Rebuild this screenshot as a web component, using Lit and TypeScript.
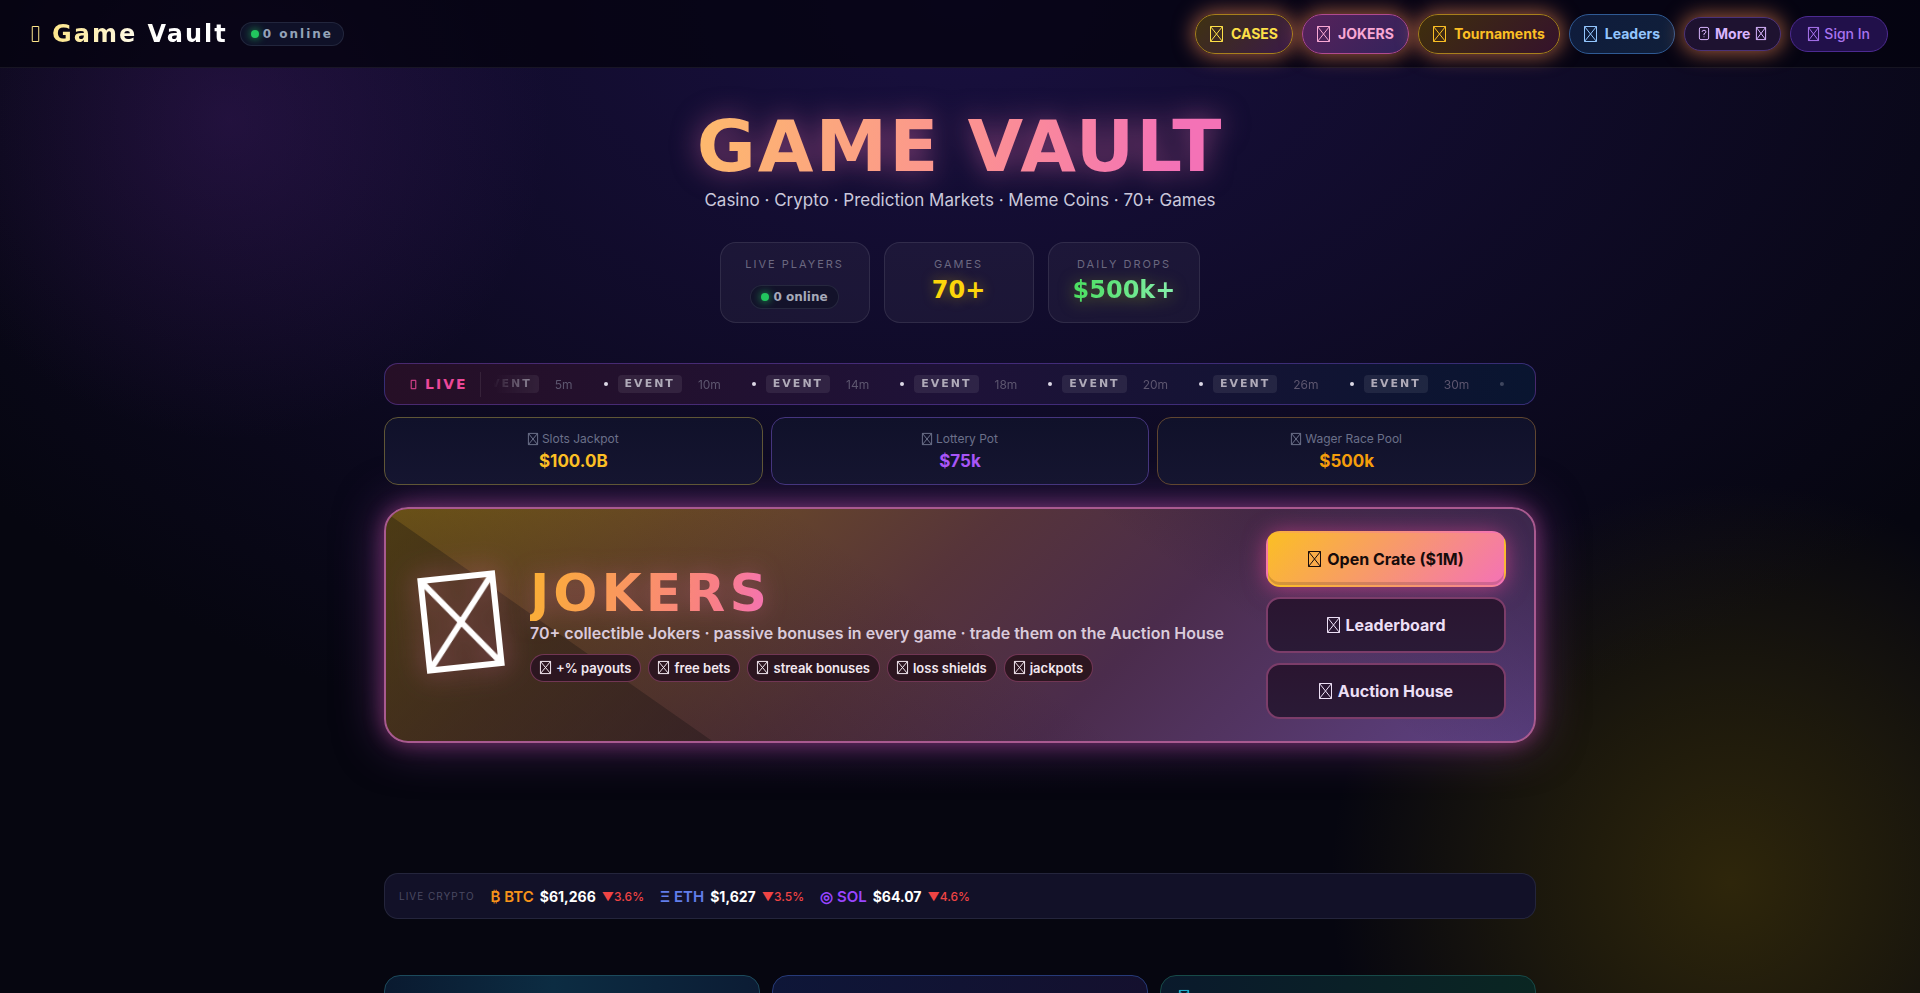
import { LitElement, html, css, svg, nothing } from "lit";
import { customElement, property } from "lit/decorators.js";

@customElement("glyph-box")
class GlyphBox extends LitElement {
  @property() kind = "cross";
  static styles = css`
    :host { display: inline-block; flex: none; }
    svg { display: block; width: 100%; height: 100%; overflow: visible; }
    path { fill: none; stroke: currentColor; stroke-width: var(--stroke, 1px); vector-effect: non-scaling-stroke; }
  `;
  render() {
    const marks: Record<string, unknown> = {
      cross: svg`<path d="M0.5 0.5H12.5V15.5H0.5Z M0.5 0.5L12.5 15.5 M12.5 0.5L0.5 15.5"/>`,
      plain: svg`<path d="M0.5 0.5H12.5V15.5H0.5Z"/>`,
      query: svg`<path d="M2.5 0.5H10.5Q12.5 .5 12.5 2.5V13.5Q12.5 15.5 10.5 15.5H2.5Q.5 15.5 .5 13.5V2.5Q.5 .5 2.5 .5Z M4 6Q4 4 6.5 4T9 6Q9 7.5 6.5 8.3V10 M6.5 11.6V12.6"/>`,
    };
    return html`<svg viewBox="0 0 13 16" preserveAspectRatio="none" aria-hidden="true">${marks[this.kind]}</svg>`;
  }
}

const NAV = [
  { label: "CASES", tone: "cases" },
  { label: "JOKERS", tone: "jokers" },
  { label: "Tournaments", tone: "tournaments" },
  { label: "Leaders", tone: "leaders" },
];
const EVENTS = ["5m", "10m", "14m", "18m", "20m", "26m", "30m", ""];
const POTS = [
  { label: "Slots Jackpot", value: "$100.0B", tone: "gold" },
  { label: "Lottery Pot", value: "$75k", tone: "violet" },
  { label: "Wager Race Pool", value: "$500k", tone: "amber" },
];
const PERKS = ["+% payouts", "free bets", "streak bonuses", "loss shields", "jackpots"];
const COINS = [
  { sign: "₿", code: "BTC", price: "$61,266", move: "3.6%", tone: "btc" },
  { sign: "Ξ", code: "ETH", price: "$1,627", move: "3.5%", tone: "eth" },
  { sign: "◎", code: "SOL", price: "$64.07", move: "4.6%", tone: "sol" },
];

@customElement("app-root")
class AppRoot extends LitElement {
  static styles = css`
    :host {
      display: block;
      height: 100vh;
      overflow-y: auto;
      scrollbar-width: none;
      color: #fff;
      font-family: Inter, "Open Sans", sans-serif;
      font-size: 14px;
      --display: "DejaVu Sans", Verdana, sans-serif;
      background:
        radial-gradient(circle 320px at 230px 120px, rgba(88, 36, 130, 0.28), transparent),
        radial-gradient(circle 400px at calc(100% - 190px) calc(100% - 110px), rgba(124, 100, 0, 0.34), rgba(100, 84, 0, 0.22) 50%, transparent),
        radial-gradient(ellipse 65% 80% at 50% 0, #191040, transparent),
        #060610;
    }
    * { box-sizing: border-box; }
    button, a { font: inherit; color: inherit; text-decoration: none; cursor: pointer; }
    h1, h2, p, dl, dd, ul { margin: 0; padding: 0; }
    ul { list-style: none; }

    header {
      display: flex;
      align-items: center;
      justify-content: space-between;
      height: 68px;
      padding: 0 32px;
      background: rgba(4, 3, 14, 0.78);
      border-bottom: 1px solid rgba(255, 255, 255, 0.07);
    }
    .brand { display: flex; align-items: center; gap: 12px; }
    .logo { display: flex; align-items: center; gap: 13px; font: 700 24px/28px var(--display); letter-spacing: 2px; }
    .logo span { background: linear-gradient(90deg, #fde68a, #fff 60%); -webkit-background-clip: text; color: transparent; }
    .logo glyph-box { width: 7px; height: 16px; color: #fde68a; }
    .online {
      display: inline-flex; align-items: center; gap: 4px;
      height: 24px; padding: 0 10px;
      border: 1px solid rgba(148, 163, 184, 0.15); border-radius: 12px;
      background: #0f1128; color: #94a3b8;
      font: 700 12px/16px var(--display);
    }
    .online.spaced { letter-spacing: 2px; }
    .online.dim { background: #13122a; color: #a5a9b8; }
    .online::before { content: ""; width: 8px; height: 8px; border-radius: 50%; background: #22c55e; box-shadow: 0 0 8px #22c55e; }
    nav { display: flex; align-items: center; gap: 9px; font-weight: 700; }
    .pill {
      display: inline-flex; align-items: center; gap: 8px;
      height: 40px; padding: 0 14px;
      border: 1px solid; border-radius: 20px; line-height: 20px;
    }
    .pill glyph-box { width: 13px; height: 16px; }
    .glow { box-shadow: 0 0 20px 2px rgba(251, 140, 85, 0.62); }
    .cases { color: #fde047; border-color: #a8801c; background: linear-gradient(135deg, #3f3210, #3a1a48); }
    .jokers { color: #f9a8d4; border-color: #b04a90; background: linear-gradient(135deg, #57225a, #33235c); }
    .tournaments { color: #fbbf24; border-color: #a8801c; background: linear-gradient(135deg, #3f2f0c, #35122c); }
    .leaders { color: #93c5fd; border-color: #2f5a94; background: linear-gradient(135deg, #0f1c3c, #101f3a); }
    .more { color: #d8b4fe; height: 34px; border-color: #4b3278; background: #1e1230; gap: 6px; }
    .more glyph-box { width: 10px; height: 13px; }
    .signin { color: #a974f0; height: 36px; font-weight: 500; border-color: #4c2a91; background: #21104a; padding: 0 17px; gap: 5px; }
    .signin glyph-box { width: 11px; height: 14px; }

    .hero { display: flex; flex-direction: column; align-items: center; padding-top: 36px; text-align: center; }
    .hero h1 {
      font: 700 72px/84px var(--display); letter-spacing: 2px;
      background: linear-gradient(100deg, #fdba6c, #fb8f94 55%, #f472b6 90%);
      -webkit-background-clip: text; color: transparent;
      filter: drop-shadow(0 0 14px rgba(244, 114, 182, 0.5));
    }
    .tagline { font-size: 17px; line-height: 24px; color: #cbc9dc; }
    .stats { display: flex; gap: 14px; margin-top: 30px; }
    .stat {
      display: flex; flex-direction: column; align-items: center; min-width: 150px; height: 81px;
      padding: 13px 24px; border: 1px solid rgba(255, 255, 255, 0.09); border-radius: 16px;
      background: rgba(255, 255, 255, 0.045);
    }
    .stat dt { font-size: 11px; line-height: 16px; letter-spacing: 2px; color: #6b6880; }
    .stat dd { display: flex; align-items: center; height: 36px; font: 700 24px/36px var(--display); }
    .stat .games { color: #fcd50b; text-shadow: 0 0 14px rgba(252, 213, 11, 0.4); }
    .stat .drops { background: linear-gradient(90deg, #4ade60, #86efac); -webkit-background-clip: text; color: transparent; filter: drop-shadow(0 2px 8px rgba(132, 150, 30, 0.6)); }
    .stat .count { height: 40px; padding-top: 12px; }

    main { max-width: 1152px; margin: 40px auto 0; }
    .ticker {
      display: flex; align-items: center; height: 42px; padding: 0 20px 0 26px;
      border: 1px solid rgba(139, 92, 246, 0.35); border-radius: 14px;
      background: linear-gradient(90deg, #260f26, #1e1238 50%, #091530);
      overflow: hidden;
    }
    .live { display: flex; align-items: center; gap: 9px; flex: none; padding-right: 12px; border-right: 1px solid rgba(255, 255, 255, 0.08); font: 700 14px/25px var(--display); letter-spacing: 2px; color: #ec4899; }
    .live glyph-box { width: 5px; height: 9px; }
    .track {
      flex: 1; min-width: 0; margin-left: 12px; display: flex; justify-content: flex-start; overflow: hidden;
      -webkit-mask: linear-gradient(90deg, transparent, #000 5%, #000 95%, transparent);
    }
    .track ul { display: flex; align-items: center; gap: 31px; margin-left: -32px; }
    .track li { display: flex; align-items: center; flex: none; color: #5d566f; font-size: 12px; }
    .track li::before { content: ""; width: 4px; height: 4px; border-radius: 50%; background: #dcd8e6; margin-right: 10px; }
    .track b { margin-right: 16px; padding: 0 7px; border-radius: 4px; background: rgba(255, 255, 255, 0.08); color: #b0abb9; font: 700 11px/18px var(--display); letter-spacing: 2px; }

    .pots { display: grid; grid-template-columns: repeat(3, 1fr); gap: 8px; margin-top: 12px; }
    .pot { display: flex; flex-direction: column; align-items: center; height: 68px; padding-top: 12px; border: 1px solid; border-radius: 14px; background: linear-gradient(#10112a, #151530); }
    .pot dt { display: flex; align-items: center; gap: 4px; font-size: 12px; line-height: 18px; color: #6b7089; }
    .pot dt glyph-box { width: 10px; height: 12px; }
    .pot dd { font-size: 17px; line-height: 26px; font-weight: 700; }
    .gold { border-color: #5f5636; } .gold dd { color: #fbbf24; }
    .violet { border-color: #45357e; } .violet dd { color: #a855f7; }
    .amber { border-color: #604630; } .amber dd { color: #f59e0b; }

    .feature {
      display: flex; align-items: center; margin-top: 22px; padding: 22px 28px; min-height: 236px;
      border: 2px solid #a95a90; border-radius: 24px;
      background:
        linear-gradient(35deg, rgba(22, 14, 22, 0.5) 22%, rgba(32, 16, 34, 0.28) 22.1%, transparent 50%),
        linear-gradient(215deg, rgba(34, 22, 44, 0.5), transparent 30%),
        linear-gradient(135deg, #836812, #6b4a26 22%, #56343a 45%, #4b2c4c 64%, #5e4286);
      box-shadow: 0 0 48px rgba(150, 70, 170, 0.5), 0 0 20px rgba(220, 80, 160, 0.45);
    }
    .card-art { width: 78px; height: 96px; margin: 0 30px 6px 8px; transform: rotate(-6deg); --stroke: 6px; filter: drop-shadow(0 0 14px rgba(244, 114, 182, 0.5)); }
    .copy { flex: 1; padding-bottom: 4px; }
    .copy h2 {
      width: max-content; font: 700 52px/56px var(--display); letter-spacing: 4px;
      background: linear-gradient(100deg, #fbb034, #f97f86 75%, #f472b6); -webkit-background-clip: text; color: transparent;
      filter: drop-shadow(0 0 12px rgba(244, 114, 182, 0.35));
    }
    .copy p { font-size: 16px; line-height: 24px; font-weight: 600; color: #dacbdb; }
    .perks { display: flex; flex-wrap: wrap; gap: 7px; margin-top: 9px; }
    .perks li { display: flex; align-items: center; gap: 5px; height: 28px; padding: 0 9px; border: 1px solid rgba(244, 114, 182, 0.35); border-radius: 14px; background: #2c1620; color: #f3e8f0; font-size: 13px; font-weight: 600; }
    .perks glyph-box { width: 11px; height: 13px; }
    .actions { display: flex; flex-direction: column; gap: 10px; width: 240px; }
    .actions button { display: flex; align-items: center; justify-content: center; gap: 6px; height: 56px; border: 2px solid #7c3d6a; border-radius: 14px; background: linear-gradient(#2a1530, #2a1a36); color: #ecdff5; font-size: 16px; font-weight: 700; }
    .actions button.primary { color: #160b0b; border-color: transparent; background: linear-gradient(135deg, #fbbf24, #f472b6); box-shadow: 0 2px 22px rgba(236, 72, 153, 0.6), inset 0 -3px rgba(0, 0, 0, 0.15); }
    .actions glyph-box { width: 13px; height: 16px; }

    .crypto { display: flex; align-items: center; gap: 16px; height: 46px; margin-top: 130px; padding: 0 14px; border: 1px solid rgba(148, 163, 184, 0.14); border-radius: 14px; background: #121128; }
    .crypto h2 { font-size: 10px; font-weight: 400; letter-spacing: 1px; color: #4a4a62; }
    .coin { display: flex; align-items: center; gap: 6px; font-size: 14px; font-weight: 700; }
    .coin .code { font-size: 15px; font-weight: 600; }
    .coin .move { font-size: 12px; font-weight: 500; color: #ef4444; }
    .btc { color: #f7931a; } .eth { color: #627eea; } .sol { color: #9945ff; }

    .tiles { display: grid; grid-template-columns: repeat(3, 1fr); gap: 12px; margin-top: 56px; }
    .tile { height: 160px; padding: 14px 18px; border: 1px solid; border-radius: 16px; color: #22b8d8; }
    .tile glyph-box { width: 10px; height: 14px; }
    .tile.one { border-color: #1c4a5c; background: linear-gradient(90deg, #0a1a30, #0c2c42 45%, #0c1c34); }
    .tile.two { border-color: #263a78; background: linear-gradient(90deg, #0e1638, #14102e); }
    .tile.three { border-color: #174a48; background: linear-gradient(90deg, #0a1a2c, #0a2622); }
  `;

  render() {
    return html`
      <header>
        <div class="brand">
          <a class="logo" href="#"><glyph-box kind="plain"></glyph-box><span>Game Vault</span></a>
          <span class="online spaced">0 online</span>
        </div>
        <nav>
          ${NAV.map((n) => html`<a href="#" class="pill ${n.tone} ${n.tone === "leaders" ? "" : "glow"}"><glyph-box></glyph-box>${n.label}</a>`)}
          <button class="pill more glow"><glyph-box kind="query"></glyph-box>More<glyph-box></glyph-box></button>
          <button class="pill signin"><glyph-box></glyph-box>Sign In</button>
        </nav>
      </header>
      <section class="hero">
        <h1>GAME VAULT</h1>
        <p class="tagline">Casino · Crypto · Prediction Markets · Meme Coins · 70+ Games</p>
        <dl class="stats">
          <div class="stat"><dt>LIVE PLAYERS</dt><dd class="count"><span class="online dim">0 online</span></dd></div>
          <div class="stat"><dt>GAMES</dt><dd class="games">70+</dd></div>
          <div class="stat"><dt>DAILY DROPS</dt><dd class="drops">$500k+</dd></div>
        </dl>
      </section>
      <main>
        <section class="ticker">
          <div class="live"><glyph-box kind="plain"></glyph-box>LIVE</div>
          <div class="track"><ul>${EVENTS.map((t) => html`<li>${t ? html`<b>EVENT</b>${t}` : nothing}</li>`)}</ul></div>
        </section>
        <dl class="pots">
          ${POTS.map((p) => html`<div class="pot ${p.tone}"><dt><glyph-box></glyph-box>${p.label}</dt><dd>${p.value}</dd></div>`)}
        </dl>
        <section class="feature">
          <glyph-box class="card-art"></glyph-box>
          <div class="copy">
            <h2>JOKERS</h2>
            <p>70+ collectible Jokers · passive bonuses in every game · trade them on the Auction House</p>
            <ul class="perks">${PERKS.map((p) => html`<li><glyph-box></glyph-box>${p}</li>`)}</ul>
          </div>
          <div class="actions">
            <button class="primary"><glyph-box></glyph-box>Open Crate ($1M)</button>
            <button><glyph-box></glyph-box>Leaderboard</button>
            <button><glyph-box></glyph-box>Auction House</button>
          </div>
        </section>
        <section class="crypto">
          <h2>LIVE CRYPTO</h2>
          ${COINS.map((c) => html`<div class="coin"><span class="code ${c.tone}">${c.sign} ${c.code}</span><span>${c.price}</span><span class="move">▼${c.move}</span></div>`)}
        </section>
        <section class="tiles">
          <div class="tile one"></div>
          <div class="tile two"></div>
          <div class="tile three"><glyph-box></glyph-box></div>
        </section>
      </main>
    `;
  }
}
